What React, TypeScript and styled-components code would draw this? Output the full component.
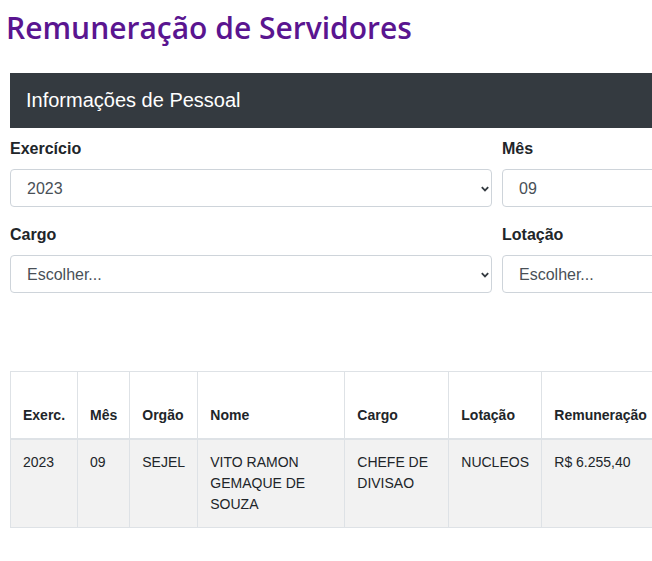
import React from "react";
import styled, {createGlobalStyle} from "styled-components";

const Global = createGlobalStyle`
  html, body {
    margin: 0;
    padding: 0;
    overflow-x: hidden;
    background: #FFFFFF;
  }
  body {
    font-family: 'Liberation Sans', Arial, sans-serif;
    color: #212529;
  }
`;

const Page = styled.div`
  width: 974px;
  padding: 0 10px;
`;

const Title = styled.h1`
  margin: 0;
  padding: 8px 0 0;
  margin-left: -4px;
  font-family: 'Open Sans', sans-serif;
  font-weight: 600;
  font-size: 30px;
  line-height: 40px;
  color: #5a1590;
`;

const PanelHeader = styled.div`
  margin-top: 25px;
  height: 55px;
  display: flex;
  align-items: center;
  padding: 0 16px;
  background: #343a40;
  color: #FFFFFF;
  font-size: 20px;
`;

const FormGrid = styled.div`
  display: grid;
  grid-template-columns: 482px 482px;
  column-gap: 10px;
  row-gap: 18px;
  padding-top: 11px;
`;

const Field = styled.div`
  display: flex;
  flex-direction: column;
`;

const Label = styled.label`
  font-weight: 700;
  font-size: 16px;
  line-height: 20px;
  margin-bottom: 10px;
`;

const SelectWrap = styled.div`
  position: relative;
`;

const Select = styled.select`
  appearance: none;
  width: 100%;
  height: 38px;
  padding: 0 28px 0 16px;
  border: 1px solid #ced4da;
  border-radius: 4px;
  background: #FFFFFF;
  font-family: 'Liberation Sans', Arial, sans-serif;
  font-size: 16px;
  color: #495057;
`;

const Chevron = styled.svg`
  position: absolute;
  right: 3px;
  top: 15px;
  width: 8px;
  height: 10px;
  pointer-events: none;
`;

const TableWrap = styled.div`
  margin-top: 78px;
`;

const Table = styled.table`
  border-collapse: collapse;
  font-size: 14px;
  table-layout: fixed;
`;

const Th = styled.th<{ w: number }>`
  width: ${p => p.w}px;
  height: 67px;
  box-sizing: border-box;
  padding: 12px;
  vertical-align: bottom;
  text-align: left;
  font-weight: 700;
  line-height: 21px;
  border: 1px solid #dee2e6;
  border-bottom: 2px solid #dee2e6;
`;

const Row = styled.tr`
  background: #f2f2f2;
`;

const Td = styled.td`
  padding: 12px;
  vertical-align: top;
  line-height: 21px;
  color: #212529;
  border: 1px solid #dee2e6;
`;

const columns: [string, number][] = [
  ["Exerc.", 67],
  ["Mês", 52],
  ["Orgão", 68],
  ["Nome", 147],
  ["Cargo", 104],
  ["Lotação", 93],
  ["Remuneração", 130],
];

const row = ["2023", "09", "SEJEL", "VITO RAMON GEMAQUE DE SOUZA", "CHEFE DE DIVISAO", "NUCLEOS", "R$ 6.255,40"];

const SelectField: React.FC<{ label: string; value: string }> = ({label, value}) => (
  <Field>
    <Label>{label}</Label>
    <SelectWrap>
      <Select defaultValue={value}>
        <option>{value}</option>
      </Select>
      <Chevron viewBox="0 0 4 5">
        <path d="M0.4 1.6 L2 3.2 L3.6 1.6" fill="none" stroke="#343a40" strokeWidth="0.9"/>
      </Chevron>
    </SelectWrap>
  </Field>
);

export default function App() {
  return (
    <Page>
      <Global/>
      <Title>Remuneração de Servidores</Title>
      <PanelHeader>Informações de Pessoal</PanelHeader>
      <FormGrid>
        <SelectField label="Exercício" value="2023"/>
        <SelectField label="Mês" value="09"/>
        <SelectField label="Cargo" value="Escolher..."/>
        <SelectField label="Lotação" value="Escolher..."/>
      </FormGrid>
      <TableWrap>
        <Table>
          <thead>
            <tr>
              {columns.map(([name, w]) => <Th key={name} w={w}>{name}</Th>)}
            </tr>
          </thead>
          <tbody>
            <Row>
              {row.map((v, i) => <Td key={i}>{v}</Td>)}
            </Row>
          </tbody>
        </Table>
      </TableWrap>
    </Page>
  );
}
